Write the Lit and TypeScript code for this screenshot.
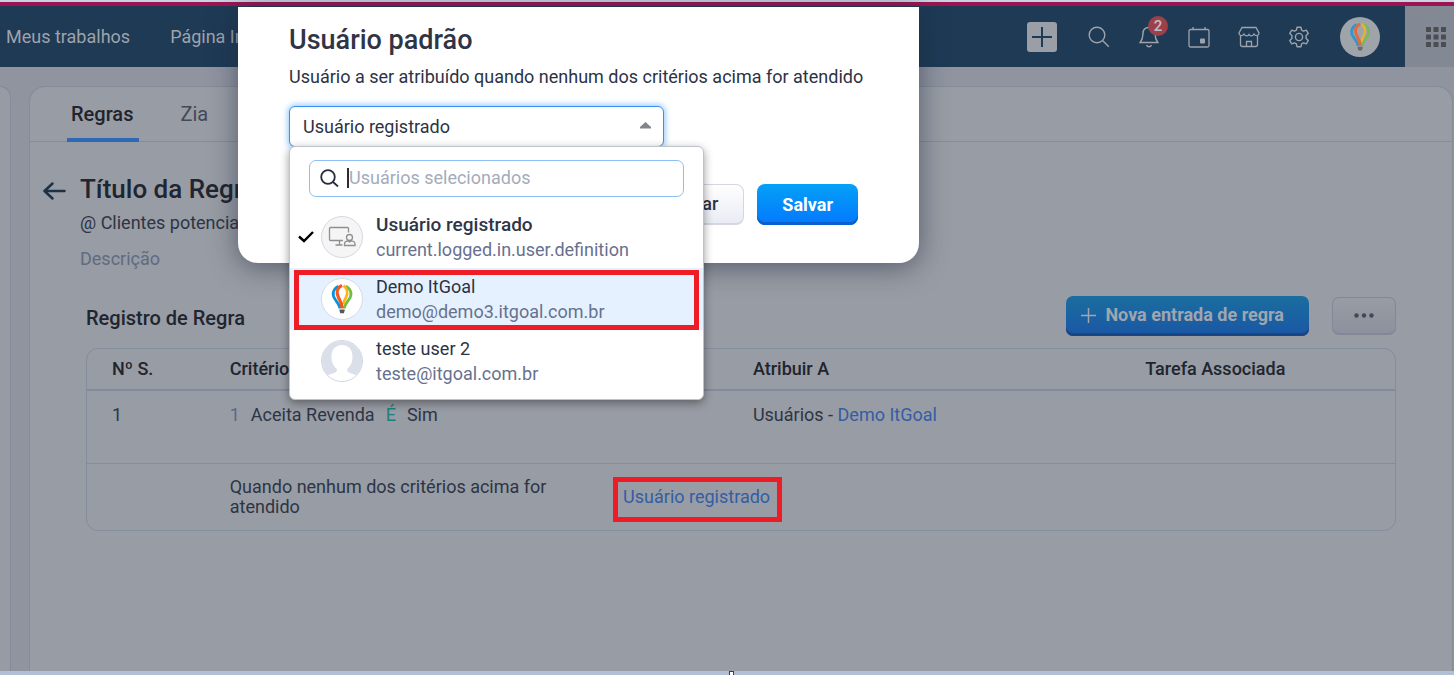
import { LitElement, html, css, svg } from "lit";
import { customElement, state } from "lit/decorators.js";

const balloon = svg`
  <g fill="none">
    <path d="M7.500 2.300C1 5.500.3 11.500 4 16.500c2 2.700 4 5 5.200 9.500" stroke="#0a93dc" stroke-width="3"/>
    <path d="M15 2.300c6.500 3.200 7.200 9.200 3.500 14.200-2 2.700-4 5-5.200 9.500" stroke="#6fbe44" stroke-width="3"/>
    <path d="M12.800 1.800c4.200 3 4.800 8 2.700 12.200-1.300 2.700-2.300 4.500-3 7.500" stroke="#fdb515" stroke-width="3"/>
    <path d="M11.200 1.500C5.500 4.500 5 9.500 7.300 14c1.700 3.300 3.700 6.500 4.200 12" stroke="#f4581f" stroke-width="3.400"/>
  </g>
  <path d="M8.500 27h5.500v1.200l-.8 2.800H9.300l-.8-2.800Z" fill="#55595c"/>`;

interface User {
  name: string;
  mail: string;
  kind: "session" | "balloon" | "person";
}

const users: User[] = [
  { name: "Usuário registrado", mail: "current.logged.in.user.definition", kind: "session" },
  { name: "Demo ItGoal", mail: "demo@demo3.itgoal.com.br", kind: "balloon" },
  { name: "teste user 2", mail: "teste@itgoal.com.br", kind: "person" },
];

@customElement("user-avatar")
export class UserAvatar extends LitElement {
  static properties = { kind: { type: String } };
  declare kind: string;

  static styles = css`
    :host { display: block; width: 42px; height: 42px; }
    svg { display: block; width: 100%; height: 100%; }
  `;

  render() {
    if (this.kind === "session") {
      return html`<svg viewBox="0 0 42 42" aria-hidden="true">
        <circle cx="21" cy="21" r="20.500" fill="#f5f5f5" stroke="#d5d8e2"/>
        <g fill="none" stroke="#8f8f8f" stroke-width="1.300">
          <path d="M22 24.500H9.500a1 1 0 0 1-1-1v-11a1 1 0 0 1 1-1h17a1 1 0 0 1 1 1v4M18.500 24.500v4M14.500 29h7"/>
          <circle cx="28.500" cy="21.500" r="3"/>
          <path d="M23.500 29.500v-1.500c0-2 1.500-3 3-3.200l2 1.200 2-1.200c2 .3 3.500 1.500 3.500 3.200v1.500Z"/>
        </g></svg>`;
    }
    if (this.kind === "person") {
      return html`<svg viewBox="0 0 42 42" aria-hidden="true">
        <defs><clipPath id="disc"><circle cx="21" cy="21" r="20.500"/></clipPath></defs>
        <circle cx="21" cy="21" r="20" fill="#dbdfea"/>
        <path clip-path="url(#disc)" fill="#fff" d="M21 5c-7 0-10.500 5-10.500 11.500 0 6 2 10 5.500 12.500 0 3-2 4-6 5-3 .8-5 2-7 4v6h36v-6c-2-2-4-3.200-7-4-4-1-6-2-6-5 3.500-2.500 5.500-6.500 5.500-12.500C31.500 10 28 5 21 5Z"/>
        <circle cx="21" cy="21" r="20.500" fill="none" stroke="#d3d7e3"/>
      </svg>`;
    }
    return html`<svg viewBox="0 0 42 42" aria-hidden="true">
      <circle cx="21" cy="21" r="20.500" fill="#fff" stroke="#d5dae6"/>
      <g transform="translate(10.500 6) scale(.94)">${balloon}</g></svg>`;
  }
}

@customElement("app-root")
export class AppRoot extends LitElement {
  @state() private selected = "Usuário registrado";

  static styles = css`
    :host {
      display: block;
      font-family: Roboto, "Liberation Sans", sans-serif;
      font-size: 18px;
      line-height: 24px;
      color: #2b3345;
    }
    * { box-sizing: border-box; }
    h1, h2, p, ul { margin: 0; padding: 0; }
    button, input, select { font: inherit; color: inherit; margin: 0; }
    a { text-decoration: none; color: #335ea4; }

    .page {
      position: relative;
      display: flex;
      flex-direction: column;
      min-height: 100vh;
      background: #8f949f;
      overflow: hidden;
    }
    .strip { border-top: 2px solid #c9d3e4; height: 6px; background: #9c1550; flex: none; }
    .nav {
      display: flex;
      align-items: stretch;
      height: 61px;
      background: #1e3a55;
      color: #9ea3ab;
      flex: none;
    }
    .nav a { color: inherit; }
    .links { display: flex; align-items: center; gap: 40px; padding-left: 6px; flex: 1; }
    .tools { display: flex; align-items: center; margin-right: 25px; }
    .tool {
      position: relative;
      display: flex;
      align-items: center;
      justify-content: center;
      width: 50px;
      height: 44px;
      padding: 0;
      border: 0;
      background: none;
    }
    .add { margin-right: 7px; }
    .badge {
      position: absolute;
      top: 1px;
      right: 6px;
      width: 20px;
      height: 20px;
      border-radius: 50%;
      background: #9d4049;
      font-size: 15px;
      line-height: 20px;
      font-weight: 500;
      color: #bcc0c6;
    }
    .profile { width: 40px; margin-left: 16px; }
    .apps { width: 49px; background: #828894; border: 0; padding: 0 0 0 21px; display: flex; align-items: center; }
    svg { display: block; flex: none; }

    .main { display: flex; gap: 18px; flex: 1; padding: 19px 1px 0 0; }
    .rail { width: 11px; border: 1px solid #848b99; border-width: 1px 1px 0 0; border-radius: 0 16px 0 0; background: #979ba4; }
    .card {
      flex: 1;
      border: 1px solid #848b99;
      border-bottom: 0;
      border-radius: 16px 16px 0 0;
      background: #989ca4;
    }
    .tabs { display: flex; gap: 37px; height: 55px; padding-left: 37px; border-bottom: 1px solid #848d9b; }
    .tab {
      display: flex;
      align-items: center;
      height: 55px;
      padding: 0 6px 2px 4px;
      border: 0;
      background: none;
      font-size: 20px;
      color: #434959;
    }
    .tab.active {
      font-weight: 500;
      color: #1f242e;
      border-radius: 3px 3px 0 0;
      background: linear-gradient(#2f68b3, #2f68b3) bottom / 100% 4px no-repeat;
    }

    .heading { display: flex; gap: 14px; padding: 31px 57px 0 13px; }
    .back { display: flex; height: 36px; align-items: center; }
    h1 { font-size: 26px; line-height: 32px; font-weight: 500; color: #20252f; }
    .module { margin-top: 6px; color: #2d3544; }
    .desc { margin-top: 12px; color: #5f6b83; }

    .rules { padding: 25px 56px 0 56px; }
    .bar { display: flex; align-items: center; gap: 23px; }
    .bar h2 { flex: 1; padding-top: 4px; font-size: 20px; line-height: 24px; font-weight: 500; color: #20252f; }
    .new {
      display: flex;
      align-items: center;
      gap: 9px;
      height: 40px;
      padding: 0 25px 2px 15px;
      border: 0;
      border-radius: 7px;
      background: linear-gradient(#1b6d9f, #1a57a5);
      box-shadow: inset 0 -3px #194583;
      color: #a0a6ae;
      font-weight: 700;
    }
    .more {
      display: flex;
      align-items: center;
      justify-content: center;
      width: 64px;
      height: 38px;
      border: 1px solid #80889a;
      border-bottom-width: 2px;
      border-radius: 7px;
      background: linear-gradient(#989ca4, #8d919d);
    }
    .frame { margin-top: 12px; border: 1px solid #848d9b; border-radius: 12px; }
    table { width: 100%; border-collapse: collapse; table-layout: fixed; }
    th { height: 41px; padding: 0 25px; text-align: left; font-weight: 500; color: #20252f; }
    td { padding: 13px 25px; vertical-align: top; color: #2d3544; border-top: 1px solid #848d9b; }
    .first td { height: 73px; padding-top: 12px; border-top: 2px solid #818b9b; }
    .c1 { width: 9%; }
    .c2 { width: 40%; }
    .c3 { width: 30%; }
    .criteria { display: flex; gap: 11px; }
    .criteria .no { color: #5a6a88; }
    .criteria .op { color: #1f7f77; }
    .fallback { display: grid; grid-template-columns: 69fr 131fr; align-items: center; line-height: 20px; }
    .fallback span { padding-right: 50px; }
    .marked { position: relative; justify-self: start; }
    .marked::after, .option.hot::after {
      content: "";
      position: absolute;
      border: 5px solid #ee1c25;
      pointer-events: none;
    }
    .marked::after { inset: -10px -12px -15px -10px; }

    .footer { display: flex; height: 4px; background: #b1bfd4; flex: none; justify-content: center; padding-left: 9px; }
    .grip { width: 5px; border: 1px solid #3a3f48; border-bottom: 0; background: #fff; }

    .dialog {
      position: absolute;
      top: 7px;
      left: 238px;
      width: 681px;
      padding: 17px 51px 38px;
      border-radius: 0 0 20px 20px;
      background: #fff;
      box-shadow: 0 4px 28px rgba(30, 38, 60, 0.55);
    }
    .dialog h2 { font-size: 27px; line-height: 32px; font-weight: 500; color: #2f3547; }
    .dialog p { margin-top: 9px; white-space: nowrap; }
    .picker { position: relative; width: 375px; margin-top: 17px; }
    .picker > select {
      display: block;
      width: 100%;
      height: 41px;
      padding: 0 40px 0 13px;
      border: 1px solid #3b92ee;
      border-radius: 6px;
      background: #fff;
      box-shadow: 0 0 6px 1px #8cc2fb;
      appearance: none;
      outline: 0;
    }
    .arrow { position: absolute; right: 13px; top: 16px; }
    .menu {
      position: absolute;
      top: 40px;
      left: 0;
      width: 415px;
      padding: 13px 0 7px;
      border: 1px solid #bfc3ca;
      border-radius: 6px;
      background: #fff;
      box-shadow: 0 3px 10px rgba(0, 0, 0, 0.4);
    }
    .search {
      display: flex;
      align-items: center;
      height: 37px;
      margin: 0 19px 9px;
      padding: 0 10px 2px;
      border: 1px solid #8cc0f5;
      border-radius: 7px;
    }
    .caret { width: 2px; height: 20px; margin-left: 8px; background: #252d3d; flex: none; }
    .search input { flex: 1; min-width: 0; padding: 0; border: 0; outline: 0; background: none; }
    .search input::placeholder { color: #a4acbb; opacity: 1; }
    ul { list-style: none; }
    .option {
      position: relative;
      display: grid;
      grid-template-columns: 16px 42px 1fr;
      column-gap: 7px;
      align-items: center;
      padding: 6px 8px;
      line-height: 25px;
    }
    .option .text { padding-left: 6px; }
    .option .mail { color: #67718f; }
    .option.on .name { font-size: 19px; font-weight: 500; color: #2f3547; }
    .option.hot { background: #e5f1fe; }
    .option.hot::after { inset: 2px 4px 0 4px; }

    .actions { display: flex; justify-content: flex-end; gap: 13px; margin-top: 37px; padding-right: 10px; }
    .btn { height: 41px; padding: 0 25px; border-radius: 8px; border: 1px solid #d4d7e2; border-bottom-width: 2px; background: linear-gradient(#fff, #e9ecf5); font-weight: 500; }
    .btn.primary { border: 0; background: linear-gradient(#04a0f6, #0478ff); box-shadow: inset 0 -3px #0a60cc; color: #fff; font-weight: 700; }
  `;

  private option(user: User, index: number) {
    const on = user.name === this.selected;
    return html`<li
      class="option ${on ? "on" : ""} ${index === 1 ? "hot" : ""}"
      role="option"
      aria-selected=${on ? "true" : "false"}
      @click=${() => (this.selected = user.name)}
    >
      <span>${on
        ? html`<svg width="16" height="12" viewBox="0 0 16 12" fill="none" stroke="#000" stroke-width="2.400"><path d="M1 5.500l5 4.500L15 1"/></svg>`
        : ""}</span>
      <user-avatar kind=${user.kind}></user-avatar>
      <div class="text"><div class="name">${user.name}</div><div class="mail">${user.mail}</div></div>
    </li>`;
  }

  private nav() {
    return html`<header class="nav">
      <nav class="links"><a href="#">Meus trabalhos</a><a href="#">Página Inicial</a></nav>
      <div class="tools">
        <button class="tool add" aria-label="Adicionar">
          <svg width="30" height="30" viewBox="0 0 30 30"><rect width="30" height="30" rx="3" fill="#999ea7"/><path d="M15 5v20M5 15h20" stroke="#1e3a55" stroke-width="2"/></svg>
        </button>
        <button class="tool" aria-label="Pesquisar">
          <svg width="22" height="22" viewBox="0 0 22 22" fill="none" stroke="#9ea3ab" stroke-width="1.400"><circle cx="9" cy="9" r="7.800"/><path d="M14.800 14.800l6 6"/></svg>
        </button>
        <button class="tool" aria-label="Notificações">
          <svg width="20" height="22" viewBox="0 0 20 22" fill="none" stroke="#9ea3ab" stroke-width="1.400"><path d="M10 1.500c-4 0-6 2.500-6 6 0 4-1 6.500-2.800 9h17.600c-1.800-2.500-2.800-5-2.800-9 0-3.500-2-6-6-6ZM7.500 19c.5 1.300 1.300 1.800 2.500 1.800s2-.5 2.500-1.800"/></svg>
          <span class="badge">2</span>
        </button>
        <button class="tool" aria-label="Calendário">
          <svg width="22" height="22" viewBox="0 0 22 22" fill="none" stroke="#9ea3ab" stroke-width="1.300"><rect x="1" y="3.500" width="20" height="17.500" rx="1.500"/><path d="M5 1v3M17 1v3"/><rect x="12" y="12.500" width="5" height="5" rx="1" fill="#9ea3ab" stroke="none"/></svg>
        </button>
        <button class="tool" aria-label="Loja">
          <svg width="22" height="22" viewBox="0 0 22 22" fill="none" stroke="#9ea3ab" stroke-width="1.300"><path d="M4 1.500h14l3 5.500c0 3-3.500 3.500-5 1-1.500 2.500-4 2.500-5 .5-1 2-3.500 2-5-.5-1.500 2.500-5 2-5-1ZM2.500 10v8.500c0 1 .8 2 2 2h13c1.200 0 2-1 2-2V10M8.500 20.500v-5h5v5"/></svg>
        </button>
        <button class="tool" aria-label="Configurações">
          <svg width="22" height="22" viewBox="0 0 22 22" fill="none" stroke="#9ea3ab" stroke-width="1.400" stroke-linejoin="round"><path d="M9 1.300h4l.6 2.900 1.900 1 2.800-1 2 3.400-2.200 2v2.800l2.200 2-2 3.400-2.800-1-1.900 1-.6 2.900H9l-.6-2.900-1.900-1-2.800 1-2-3.400 2.200-2V9.600l-2.200-2 2-3.400 2.800 1 1.900-1Z"/><circle cx="11" cy="11" r="3.600"/></svg>
        </button>
        <button class="tool profile" aria-label="Perfil">
          <svg width="40" height="40" viewBox="0 0 40 40"><circle cx="20" cy="20" r="20" fill="#9fa4ab"/><g opacity=".75" transform="translate(10 5.500) scale(.9)">${balloon}</g></svg>
        </button>
      </div>
      <button class="apps" aria-label="Aplicativos">
        <svg width="20" height="20" viewBox="0 0 20 20" fill="#4a4d52"><path d="M0 0h5v5H0zM7.500 0h5v5h-5zM15 0h5v5h-5zM0 7.500h5v5H0zM7.500 7.500h5v5h-5zM15 7.500h5v5h-5zM0 15h5v5H0zM7.500 15h5v5h-5zM15 15h5v5h-5z"/></svg>
      </button>
    </header>`;
  }

  private rules() {
    return html`<section class="rules">
      <div class="bar">
        <h2>Registro de Regra</h2>
        <button class="new">
          <svg width="15" height="15" viewBox="0 0 15 15" stroke="#9ea7b2" stroke-width="1.500"><path d="M7.500 0v15M0 7.500h15"/></svg>
          Nova entrada de regra
        </button>
        <button class="more" aria-label="Mais opções">
          <svg width="20" height="5" viewBox="0 0 20 5" fill="#434854"><circle cx="2.500" cy="2.500" r="2.200"/><circle cx="10" cy="2.500" r="2.200"/><circle cx="17.500" cy="2.500" r="2.200"/></svg>
        </button>
      </div>
      <div class="frame">
        <table>
          <thead>
            <tr><th class="c1">Nº S.</th><th class="c2">Critérios</th><th class="c3">Atribuir A</th><th>Tarefa Associada</th></tr>
          </thead>
          <tbody>
            <tr class="first">
              <td>1</td>
              <td><div class="criteria"><span class="no">1</span><span>Aceita Revenda</span><span class="op">É</span><span>Sim</span></div></td>
              <td>Usuários - <a href="#">Demo ItGoal</a></td>
              <td></td>
            </tr>
            <tr>
              <td></td>
              <td colspan="3"><div class="fallback"><span>Quando nenhum dos critérios acima for atendido</span><a class="marked" href="#">Usuário registrado</a></div></td>
            </tr>
          </tbody>
        </table>
      </div>
    </section>`;
  }

  private dialog() {
    return html`<section class="dialog" role="dialog" aria-labelledby="dialog-title">
      <h2 id="dialog-title">Usuário padrão</h2>
      <p><label for="user">Usuário a ser atribuído quando nenhum dos critérios acima for atendido</label></p>
      <div class="picker">
        <select id="user" .value=${this.selected} @change=${(e: Event) => (this.selected = (e.target as HTMLSelectElement).value)}>
          ${users.map((u) => html`<option>${u.name}</option>`)}
        </select>
        <svg class="arrow" width="11" height="7" viewBox="0 0 11 7"><path d="M5.500 0L11 5v1.500H0V5Z" fill="#80858f"/></svg>
        <div class="menu">
          <div class="search">
            <svg width="19" height="18" viewBox="0 0 19 18" fill="none" stroke="#252d3d" stroke-width="1.800"><circle cx="8" cy="8" r="6.800"/><path d="M13 13l5 4.500"/></svg>
            <span class="caret"></span>
            <input type="text" placeholder="Usuários selecionados" aria-label="Usuários selecionados" />
          </div>
          <ul role="listbox" aria-label="Usuários">${users.map((u, i) => this.option(u, i))}</ul>
        </div>
      </div>
      <div class="actions">
        <button class="btn">Cancelar</button>
        <button class="btn primary">Salvar</button>
      </div>
    </section>`;
  }

  render() {
    return html`<div class="page">
      <div class="strip"></div>
      ${this.nav()}
      <main class="main">
        <aside class="rail"></aside>
        <div class="card">
          <div class="tabs"><button class="tab active">Regras</button><button class="tab">Zia</button></div>
          <div class="heading">
            <a class="back" href="#" aria-label="Voltar"><svg width="23" height="18" viewBox="0 0 23 18" fill="none" stroke="#1d3247" stroke-width="2.500" stroke-linecap="round" stroke-linejoin="round"><path d="M21.500 9H2M9.500 1.500L1.500 9l8 7.500"/></svg></a>
            <div>
              <h1>Título da Regra</h1>
              <p class="module">@ Clientes potenciais</p>
              <p class="desc">Descrição</p>
            </div>
          </div>
          ${this.rules()}
        </div>
      </main>
      <div class="footer"><span class="grip"></span></div>
      ${this.dialog()}
    </div>`;
  }
}
